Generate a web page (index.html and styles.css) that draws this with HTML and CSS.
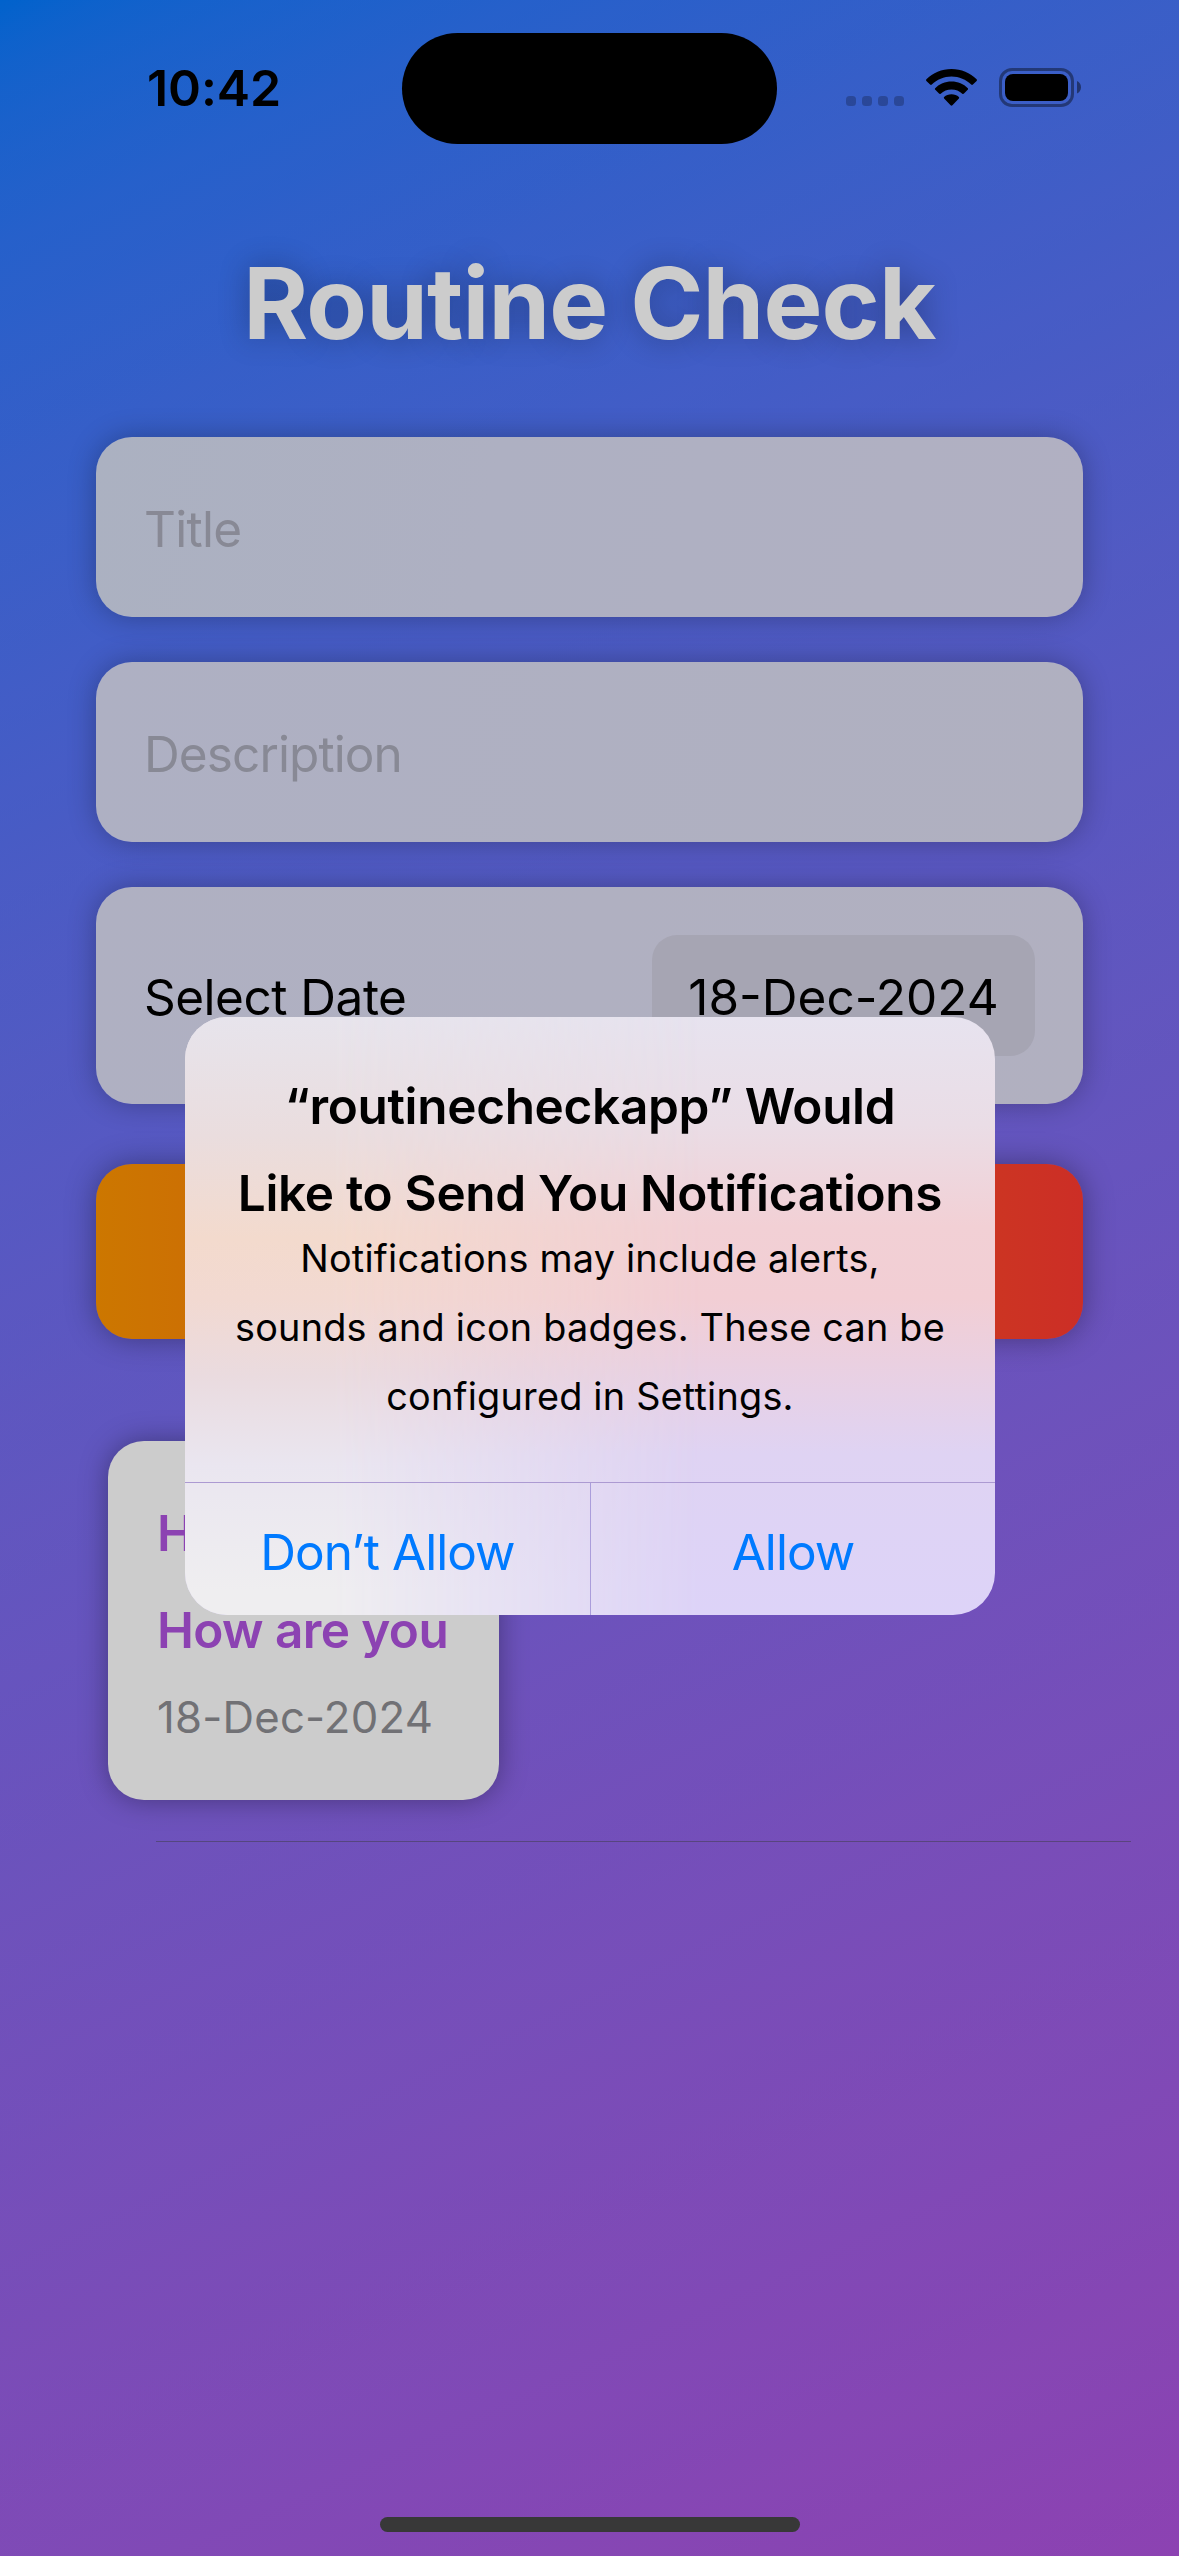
FILE: index.html
```html
<!DOCTYPE html>
<html lang="en">
<head>
<meta charset="utf-8">
<title>Routine Check</title>
<link rel="stylesheet" href="styles.css">
</head>
<body>
<div class="phone">
  <header class="status">
    <div class="status-time"><span class="clock">10:42</span></div>
    <div class="island"></div>
    <div class="status-icons">
      <svg class="signal" viewBox="0 0 58 10"><rect width="10" height="10" rx="3.5"/><rect x="16" width="10" height="10" rx="3.5"/><rect x="32" width="10" height="10" rx="3.5"/><rect x="48" width="10" height="10" rx="3.5"/></svg>
      <svg class="wifi" viewBox="0 0 51 37"><path d="M25.5 0C35.300 0 44.200 3.900 50.600 10.200 51.100 10.700 51.100 11.400 50.600 11.900L46.900 15.600C46.400 16.100 45.700 16.100 45.200 15.600 40.100 10.700 33.100 7.600 25.500 7.600S10.900 10.700 5.800 15.600C5.300 16.100 4.600 16.100 4.100 15.600L.4 11.900C-.1 11.400-.1 10.700 .4 10.200 6.800 3.900 15.700 0 25.500 0Z"/><path d="M25.500 12.600C31.900 12.600 37.600 15.100 41.800 19.200 42.200 19.600 42.200 20.300 41.700 20.800L38 24.600C37.500 25.100 36.800 25.100 36.300 24.700 33.500 22.100 29.700 20.500 25.500 20.500S17.500 22.100 14.700 24.700C14.200 25.100 13.500 25.100 13 24.600L9.300 20.800C8.800 20.300 8.800 19.600 9.200 19.200 13.400 15.100 19.100 12.600 25.500 12.600Z"/><path d="M25.500 25.200C28.400 25.200 31 26.200 32.900 28 33.300 28.400 33.300 29.100 32.900 29.500L26.400 36.300C25.900 36.800 25.100 36.800 24.600 36.300L18.100 29.500C17.700 29.100 17.700 28.400 18.100 28 20 26.200 22.600 25.200 25.500 25.200Z"/></svg>
      <svg class="battery" viewBox="0 0 82 39"><rect class="battery-shell" x="1.500" y="1.500" width="72" height="36" rx="11.500"/><rect x="6" y="6" width="63" height="27" rx="8"/><path class="battery-cap" d="M78 13C80.500 14 82 16.500 82 19.300S80.500 24.500 78 25.500Z"/></svg>
    </div>
  </header>

  <main class="content">
    <h1 class="heading">Routine Check</h1>
    <form class="form">
      <div class="field"><span class="placeholder">Title</span></div>
      <div class="field field-second"><span class="placeholder placeholder-long">Description</span></div>
      <div class="field field-date">
        <span class="date-label">Select Date</span>
        <span class="date-pill">18-Dec-2024</span>
      </div>
      <div class="submit"></div>
    </form>
    <section class="list">
      <article class="card">
        <p class="card-title">Hi</p>
        <p class="card-text">How are you</p>
        <p class="card-date">18-Dec-2024</p>
      </article>
      <hr class="rule">
    </section>
  </main>
  <footer class="home"><div class="home-bar"></div></footer>

  <div class="alert">
    <div class="alert-body">
      <h2 class="alert-title">“routinecheckapp” Would<br>Like to Send You Notifications</h2>
      <p class="alert-message">Notifications may include alerts,<br>sounds and icon badges. These can be<br>configured in Settings.</p>
    </div>
    <div class="alert-actions">
      <span class="action">Don’t Allow</span>
      <span class="action">Allow</span>
    </div>
  </div>
</div>
</body>
</html>
```

FILE: styles.css
```css
* { box-sizing: border-box; margin: 0; padding: 0; }

body {
  font-family: Inter, "Liberation Sans", sans-serif;
  color: #000;
}

.phone {
  position: relative;
  width: 1179px;
  height: 2556px;
  overflow: hidden;
  display: flex;
  flex-direction: column;
  background:
    linear-gradient(rgba(0, 0, 0, .2), rgba(0, 0, 0, .2)),
    linear-gradient(155.24deg in oklab, #007aff, #af52de);
}

.status {
  display: grid;
  grid-template-columns: 402px 375px 402px;
  height: 177px;
  padding-top: 33px;
}
.status-time { padding-left: 147px; }
.clock {
  display: block;
  font-size: 50px;
  line-height: 111px;
  font-weight: 600;
  letter-spacing: -.1px;
}
.island { height: 111px; border-radius: 56px; background: #000; }
.status-icons { display: flex; align-items: flex-start; padding-left: 69px; }
.signal { width: 58px; height: 10px; margin-top: 63px; opacity: .23; }
.wifi { width: 51px; height: 37px; margin: 36px 0 0 22px; }
.battery { width: 82px; height: 39px; margin: 35px 0 0 22px; }
.battery-shell { fill: none; stroke: #000; stroke-width: 3; opacity: .4; }
.battery-cap { opacity: .45; }

.content { flex: 1; }
.heading {
  height: 260px;
  padding-top: 66px;
  font-size: 99px;
  line-height: 120px;
  font-weight: 700;
  text-align: center;
  color: #ccc;
  letter-spacing: -.8px;
  text-shadow: 0 0 30px rgba(0, 0, 0, .3);
}

.form { padding: 0 96px; }
.field {
  display: flex;
  align-items: center;
  height: 180px;
  margin-bottom: 45px;
  padding: 0 48px;
  border-radius: 36px;
  background: linear-gradient(100deg, #abb1c1, #aeb0c2 40%, #b1b0c2);
  box-shadow: 0 0 28px rgba(0, 0, 0, .28);
  font-size: 49.500px;
  line-height: 60px;
}
.field-second { background: linear-gradient(100deg, #aeb0c3, #b0b0c0); }
.field-date {
  height: 217px;
  margin-bottom: 60px;
  justify-content: space-between;
  background: linear-gradient(100deg, #afb0c2, #b1b0c0);
}
.placeholder { padding-top: 4px; color: #888995; letter-spacing: -.7px; }
.placeholder-long { letter-spacing: -.9px; }
.date-label { padding-top: 3px; letter-spacing: -.5px; }
.date-pill {
  display: flex;
  align-items: center;
  justify-content: center;
  width: 383px;
  height: 121px;
  padding-top: 3px;
  border-radius: 25px;
  background: #a6a5b3;
}
.submit {
  height: 175px;
  border-radius: 36px;
  background: linear-gradient(90deg, #cc7700, #cc2e26);
  box-shadow: 0 0 30px rgba(0, 0, 0, .35);
}

.list { padding: 102px 48px 0 108px; }
.card {
  width: 391px;
  height: 359px;
  padding: 62px 0 0 49px;
  border-radius: 36px;
  background: #ccc;
  box-shadow: 0 0 28px rgba(0, 0, 0, .35);
}
.card-title, .card-text {
  font-size: 49.500px;
  line-height: 60px;
  font-weight: 600;
  letter-spacing: -.6px;
  color: #8c42b2;
}
.card-text { margin-top: 37px; }
.card-date {
  margin-top: 31px;
  font-size: 43.700px;
  line-height: 54px;
  letter-spacing: .2px;
  color: #717175;
}
.rule { height: 1px; margin: 41px 0 0 48px; border: 0; background: rgba(60, 60, 67, .5); }

.home { display: flex; justify-content: center; height: 39px; }
.home-bar { width: 420px; height: 15px; border-radius: 8px; background: #383838; }

.alert {
  position: absolute;
  left: 185px;
  top: 1017px;
  width: 810px;
  height: 598px;
  border-radius: 42px;
  overflow: hidden;
  text-align: center;
  background: linear-gradient(#e7e3ef, #eadde6 18%, #f2d0d5 35%, #f2ced4 47%, #ead0e1 58%, #dfd3f3 73%, #ddd3f8);
}
.alert::before {
  content: "";
  position: absolute;
  inset: 0;
  background: linear-gradient(#e7e4ec, #eaddde 20%, #f3dacd 37%, #f2d9d1 47%, #eadbdf 60%, #eae6f0 75%, #efeef0 96%);
  mask-image: linear-gradient(90deg, #000 18%, transparent 64%);
}
.alert-body { position: relative; height: 465px; padding-top: 46px; }
.alert-title {
  font-size: 49.500px;
  line-height: 87px;
  font-weight: 600;
  letter-spacing: -.33px;
}
.alert-message {
  margin-top: -13px;
  font-size: 37.800px;
  line-height: 69px;
  letter-spacing: .22px;
}
.alert-actions {
  position: relative;
  display: grid;
  grid-template-columns: 1fr 1fr;
  height: 133px;
  border-top: 1px solid #ac9ad2;
  color: #007aff;
  font-size: 49.500px;
  letter-spacing: -.95px;
}
.action { display: flex; align-items: center; justify-content: center; padding-top: 6px; }
.action + .action { border-left: 1px solid #aa9ddb; }
```
